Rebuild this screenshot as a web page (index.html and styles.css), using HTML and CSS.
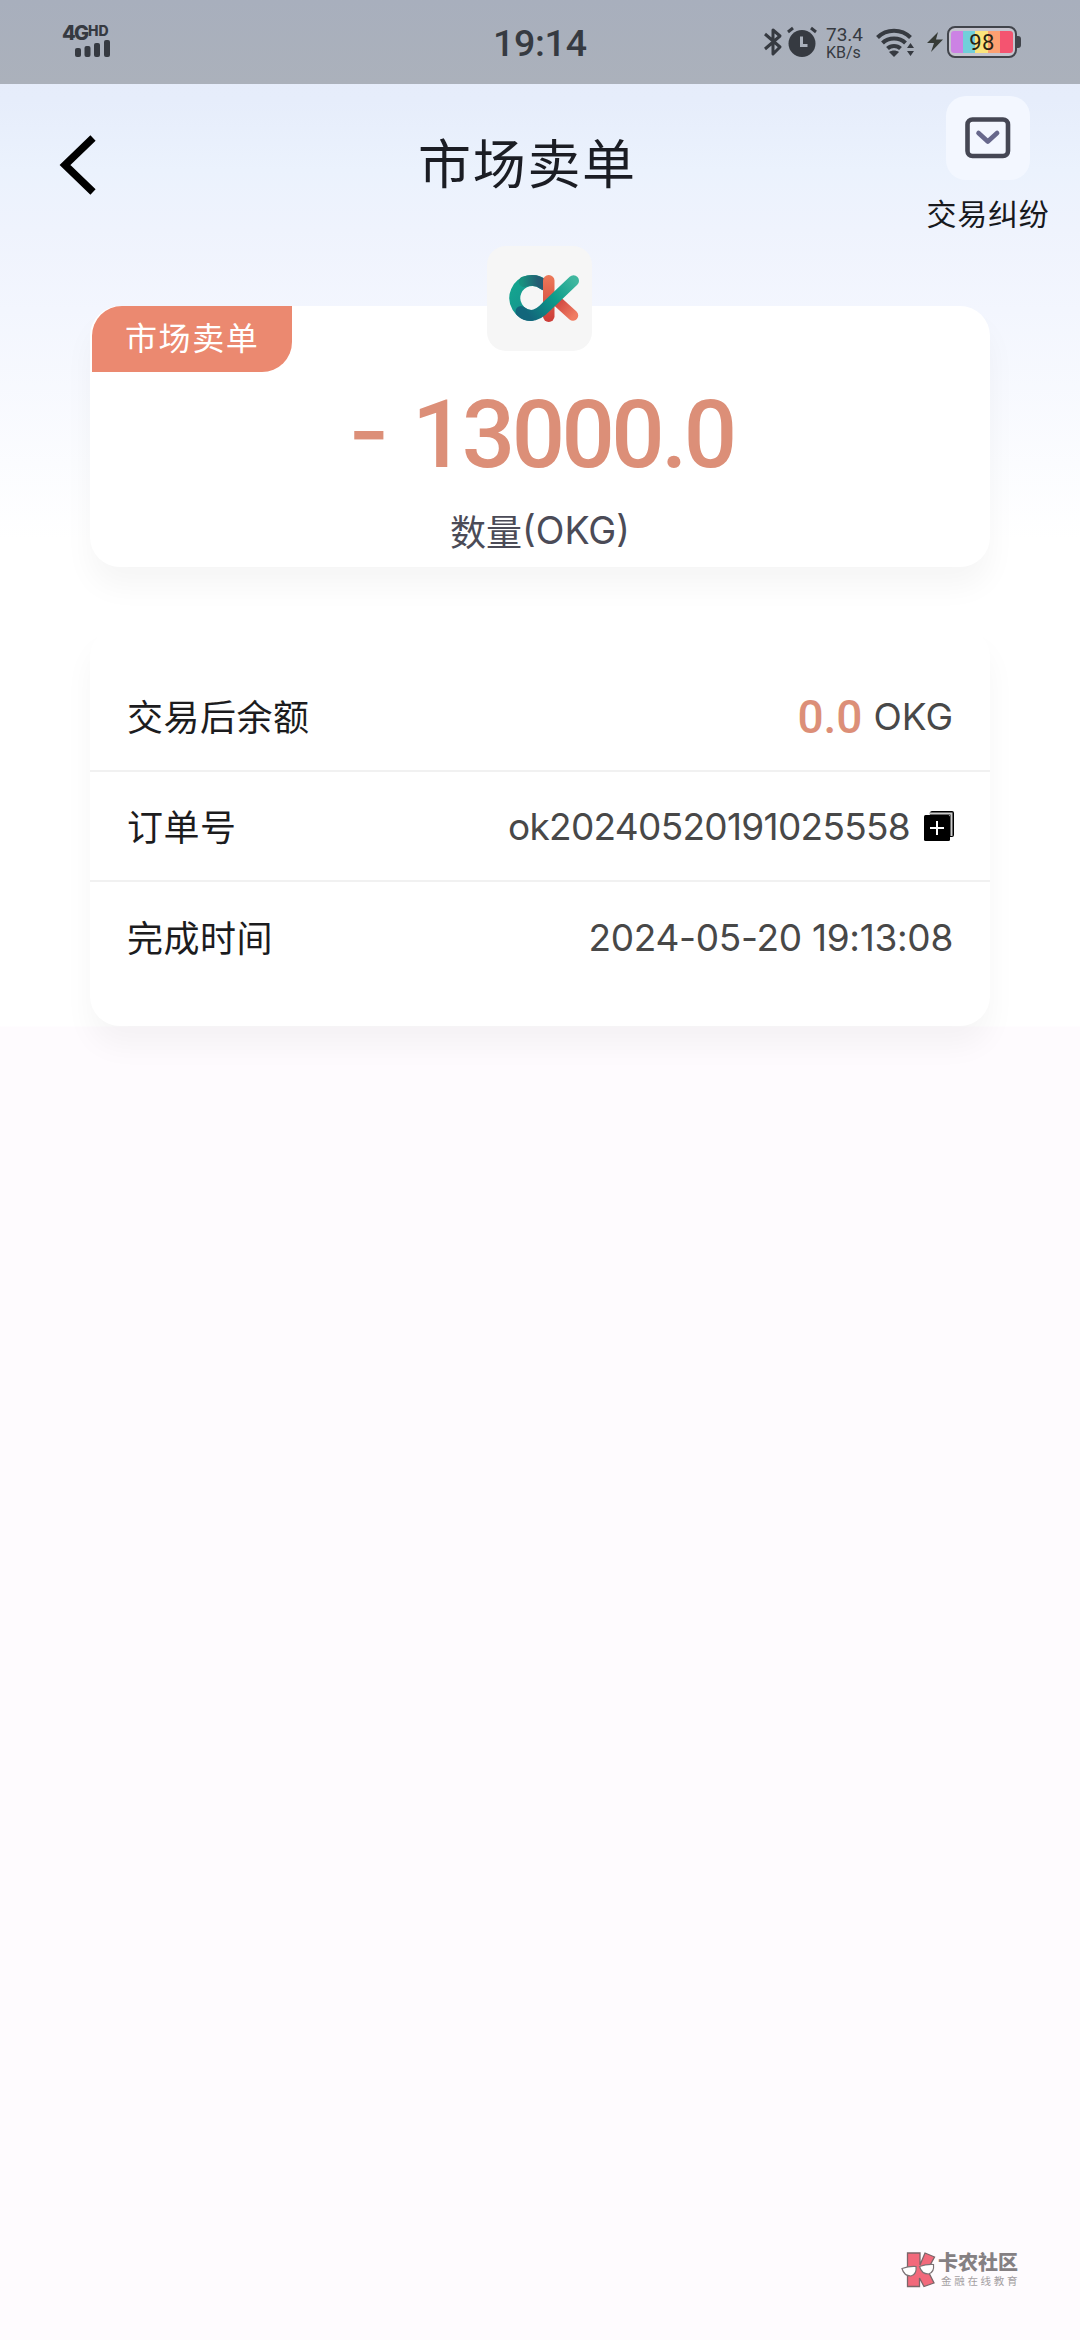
FILE: index.html
```
<!DOCTYPE html>
<html lang="zh-CN">
<head>
<meta charset="utf-8">
<title>市场卖单</title>
<link rel="stylesheet" href="styles.css">
</head>
<body>
<div class="screen">
  <div class="status">
    <div class="signal">
      <div class="net"><span class="net-4g">4G</span><span class="net-hd">HD</span></div>
      <svg class="bars" width="36" height="17" viewBox="0 0 36 17"><g fill="#363a41"><rect x="0" y="8" width="6" height="9" rx="2"/><rect x="9.500" y="6" width="6" height="11" rx="2"/><rect x="19" y="3" width="6" height="14" rx="2"/><rect x="29" y="0" width="6" height="17" rx="2"/></g></svg>
    </div>
    <div class="clock">19:14</div>
    <div class="indicators">
      <svg class="bt" width="20" height="30" viewBox="0 0 20 30" fill="none" stroke="#363a41" stroke-width="3" stroke-linejoin="round"><path d="M2 7l15 13-7 7V3l7 6L2 22"/></svg>
      <svg class="alarm" width="30" height="32" viewBox="0 0 30 32"><circle cx="15" cy="17.500" r="13.500" fill="#363a41"/><path d="M1 6l5-4M29 6l-5-4" stroke="#363a41" stroke-width="3"/><path d="M14.500 10.500v9h6" fill="none" stroke="#a9b0bb" stroke-width="3"/></svg>
      <div class="speed"><span class="speed-n">73.4</span><span class="speed-u">KB/s</span></div>
      <svg class="wifi" width="40" height="30" viewBox="0 0 40 30"><g fill="none" stroke="#363a41" stroke-width="4"><path d="M1.500 9.500c9-9 24-9 33 0"/><path d="M6.500 15c6-6 17-6 23 0"/><path d="M11.500 20.500c3.500-3.500 9.500-3.500 13 0"/></g><path d="M13 24c3-2 7-2 10 0l-5 5z" fill="#363a41"/><path d="M31 20l3.500-5 3.500 5zM31 23h7l-3.500 5z" fill="#363a41"/></svg>
      <svg class="bolt" width="16" height="20" viewBox="0 0 16 20"><path d="M11 0L0 11h7L4 20 16 7.500H9z" fill="#363a35"/></svg>
      <div class="battery"><span class="battery-fill">98</span><i class="battery-tip"></i></div>
    </div>
  </div>

  <div class="header">
    <svg class="back" width="40" height="64" viewBox="0 0 40 64"><path d="M35 5L7 32l28 27" fill="none" stroke="#000" stroke-width="7.500"/></svg>
    <h1 class="title">市场卖单</h1>
    <div class="dispute">
      <div class="dispute-tile"><svg width="46" height="42" viewBox="0 0 46 42" fill="none"><rect x="2.500" y="2.500" width="40.500" height="36.500" rx="5" stroke="#454754" stroke-width="4.600"/><path d="M13.500 16l9.300 8.500 9.300-8.500" stroke="#67688c" stroke-width="4.600" stroke-linecap="round" stroke-linejoin="round"/></svg></div>
      <div class="dispute-label">交易纠纷</div>
    </div>
  </div>

  <div class="card amount-card">
    <div class="tag">市场卖单</div>
    <div class="coin">
      <svg width="78" height="54" viewBox="0 0 78 54" fill="none" stroke-linecap="round">
        <defs>
          <linearGradient id="ring" x1="0" y1="0" x2="1" y2="1"><stop offset="0" stop-color="#13a58f"/><stop offset=".5" stop-color="#15988e"/><stop offset="1" stop-color="#126e80"/></linearGradient>
          <linearGradient id="top" gradientUnits="userSpaceOnUse" x1="18" y1="0" x2="44" y2="0"><stop offset="0" stop-color="#18917f"/><stop offset=".6" stop-color="#235e73"/><stop offset="1" stop-color="#285470"/></linearGradient>
          <linearGradient id="arm" gradientUnits="userSpaceOnUse" x1="71" y1="9" x2="26" y2="45"><stop offset="0" stop-color="#40b79f"/><stop offset=".45" stop-color="#0d9d8b"/><stop offset="1" stop-color="#12667b"/></linearGradient>
          <linearGradient id="stem" x1="0" y1="0" x2="0" y2="1"><stop offset="0" stop-color="#ed7959"/><stop offset="1" stop-color="#cc3c38"/></linearGradient>
          <linearGradient id="leg" gradientUnits="userSpaceOnUse" x1="50" y1="26" x2="70" y2="44"><stop offset="0" stop-color="#c93b39"/><stop offset="1" stop-color="#f07c62"/></linearGradient>
        </defs>
        <path d="M40 13A17.500 17.500 0 1 0 27 43.500" stroke="url(#ring)" stroke-width="11"/>
        <path d="M20 9.800q11-4 20 3" stroke="url(#top)" stroke-width="10.500"/>
        <rect x="39" y="3" width="11.500" height="47" rx="5.700" fill="url(#stem)"/>
        <path d="M53 29l16 14.500" stroke="url(#leg)" stroke-width="10.500"/>
        <path d="M69.500 8.800L42 35q-8 8.500-15 8.500-6 0-10-4" stroke="url(#arm)" stroke-width="11"/>
      </svg>
    </div>
    <div class="amount"><span class="minus">-</span><span class="digits">13000.0</span></div>
    <div class="unit"><span>数量</span><span class="unit-code">(OKG)</span></div>
  </div>

  <div class="card details">
    <div class="row"><span class="label">交易后余额</span><span class="value"><b class="balance">0.0</b><span class="code">OKG</span></span></div>
    <div class="row"><span class="label">订单号</span><span class="value"><span class="order">ok20240520191025558</span><svg class="copy" width="30" height="30" viewBox="0 0 30 30"><path d="M6 2q0-2 2-2h20q2 0 2 2v22q0 2-2 2h-2V4H6z" fill="#000"/><path d="M5 2.500h22.500V25" fill="none" stroke="#ccc" stroke-width="2"/><rect x="0" y="4" width="26" height="26" rx="1.500" fill="#000"/><path d="M13 10v14M6 17h14" stroke="#fff" stroke-width="2"/></svg></span></div>
    <div class="row"><span class="label">完成时间</span><span class="value date">2024-05-20 19:13:08</span></div>
  </div>

  <div class="brand">
    <svg width="35" height="36" viewBox="0 0 35 36"><g fill="#f2697b" stroke="#7b666a" stroke-width="1.300"><path d="M6.500 1h12.500v12L24 1l9.500 4-7 13L33 31l-10 3.500L18.500 26v8.500h-12z"/></g><g fill="#fff" stroke="#7b7275" stroke-width="1.200"><path d="M1 16.500q7-2.500 14-2 1 8-5 9.500-7 0-9-7.500z"/><path d="M18.500 14.500q7-2.500 14-2 1 8-5 9.500-7 0-9-7.500z"/></g></svg>
    <div class="brand-text"><span class="brand-name">卡农社区</span><span class="brand-sub">金融在线教育</span></div>
  </div>
</div>
</body>
</html>
```
FILE: styles.css
```
* { box-sizing: border-box; }
body { margin: 0; font-family: Roboto, "Noto Sans CJK SC", sans-serif; color: #1c1c1e; }
svg { display: block; flex: none; }
.screen {
  width: 1080px; height: 2340px; overflow: hidden; position: relative;
  display: flex; flex-direction: column; align-items: center;
  background: linear-gradient(#e5ebfa 0, #e6edfb 100px, #ebf2fd 170px, #eff3fd 230px, #f3f6fe 310px, #fff 540px, #fff 1026px, #fefbfe 1027px);
}

.status { width: 100%; height: 84px; flex: none; display: flex; align-items: flex-start; background: linear-gradient(#a8afbd, #abb1bb); color: #363a41; }
.signal { width: 130px; margin-left: 62px; padding-top: 23px; flex: none; }
.net { display: flex; height: 17px; font-family: Inter, sans-serif; font-weight: 800; }
.net-4g { font-size: 20px; line-height: 20px; letter-spacing: -1.800px; width: 26px; }
.net-hd { font-size: 14px; line-height: 15px; letter-spacing: 0; }
.bars { margin-left: 13px; }
.clock { width: 110px; margin-left: 301px; font-size: 37.500px; line-height: 86px; font-weight: 500; letter-spacing: -.3px; }
.indicators { display: flex; margin-left: 160px; height: 84px; position: relative; }
.bt { margin-top: 27px; }
.alarm { margin: 26px 0 0 4px; }
.speed { display: flex; flex-direction: column; width: 50px; margin: 25px 0 0 9px; }
.speed-n { font-size: 19px; line-height: 19px; }
.speed-u { font-size: 16px; line-height: 17px; }
.wifi { margin-top: 28px; }
.bolt { margin: 32px 0 0 11px; }
.battery { position: relative; width: 70px; height: 32px; margin: 26px 0 0 4px; padding: 3px 2px; border: 2px solid #41444b; border-radius: 8px; background: #c4c4ce; }
.battery-fill { display: block; height: 22px; text-align: center; font-size: 22px; line-height: 24px; letter-spacing: .3px; border-radius: 3px; color: #292414; background: linear-gradient(90deg, #cc82e4 0 19%, #72cfda 19% 38%, #fbe47c 38% 59%, #fda071 59% 79%, #f45470 79%); }
.battery-tip { position: absolute; right: -6px; top: 8px; width: 4px; height: 12px; border-radius: 0 3px 3px 0; background: #41444b; }

.header { width: 100%; height: 222px; flex: none; display: flex; }
.back { margin: 49px 0 0 58px; }
.title { width: 240px; margin: 46px 0 0 320px; font-size: 53px; line-height: 72px; letter-spacing: 1.700px; font-weight: 400; color: #1b1d24; }
.dispute { margin: 12px 0 0 260px; width: 140px; display: flex; flex-direction: column; align-items: center; }
.dispute-tile { width: 84px; height: 84px; border-radius: 20px; background: #f3f7ff; display: flex; align-items: center; justify-content: center; }
.dispute-label { margin-top: 13px; font-size: 30px; line-height: 44px; letter-spacing: .7px; color: #17191e; white-space: nowrap; }

.card { position: relative; width: 900px; flex: none; background: #fff; border-radius: 30px; box-shadow: 0 20px 30px rgba(0,0,0,.04); }
.amount-card { height: 261px; display: flex; flex-direction: column; align-items: center; }
.tag { position: absolute; left: 2px; top: 0; width: 200px; height: 66px; border-radius: 30px 0 30px 0; background: #eb8970; color: #fff; font-size: 32px; line-height: 67px; letter-spacing: 1.600px; padding-left: 33px; }
.coin { position: absolute; left: 397px; top: -60px; width: 105px; height: 105px; border-radius: 19px; background: #f6f6f6; display: flex; align-items: center; justify-content: center; padding-left: 6px; }
.amount { display: flex; margin-top: 73px; width: 640px; height: 110px; padding-left: 128px; color: #dc8f78; font-weight: 500; }
.minus { width: 64px; font-family: Inter, sans-serif; font-size: 90px; line-height: 104px; }
.digits { font-size: 94px; line-height: 112px; letter-spacing: -3.600px; }
.unit { display: flex; align-items: center; height: 54px; margin-top: 14px; color: #4b4b57; font-size: 36px; }
.unit-code { font-family: Inter, sans-serif; font-size: 37.500px; font-weight: 400; }

.details { margin-top: 60px; height: 399px; padding: 35px 0; }
.row { height: 110px; padding: 0 37px; display: flex; align-items: center; justify-content: space-between; border-bottom: 2px solid #f1f1f1; }
.row:last-child { border-bottom: 0; }
.label { font-size: 36px; letter-spacing: .5px; margin-top: -2px; }
.value { display: flex; align-items: center; font-family: Inter, sans-serif; font-size: 37px; font-weight: 400; color: #484848; }
.balance { color: #dc8f78; font-family: Roboto, sans-serif; font-size: 46px; font-weight: 500; margin-right: 11px; margin-top: 1px; }
.order { letter-spacing: -.7px; }
.date { letter-spacing: -.3px; }
.copy { margin-left: 14px; margin-right: -1px; }

.brand { display: flex; margin-top: 1226px; margin-left: 842px; gap: 2px; width: 120px; }
.brand-text { display: flex; flex-direction: column; white-space: nowrap; }
.brand-name { font-size: 20px; line-height: 23px; font-weight: 900; color: #858083; }
.brand-sub { font-size: 10.500px; line-height: 13px; letter-spacing: 2.700px; margin-left: 3px; color: #a49fa2; }
```
